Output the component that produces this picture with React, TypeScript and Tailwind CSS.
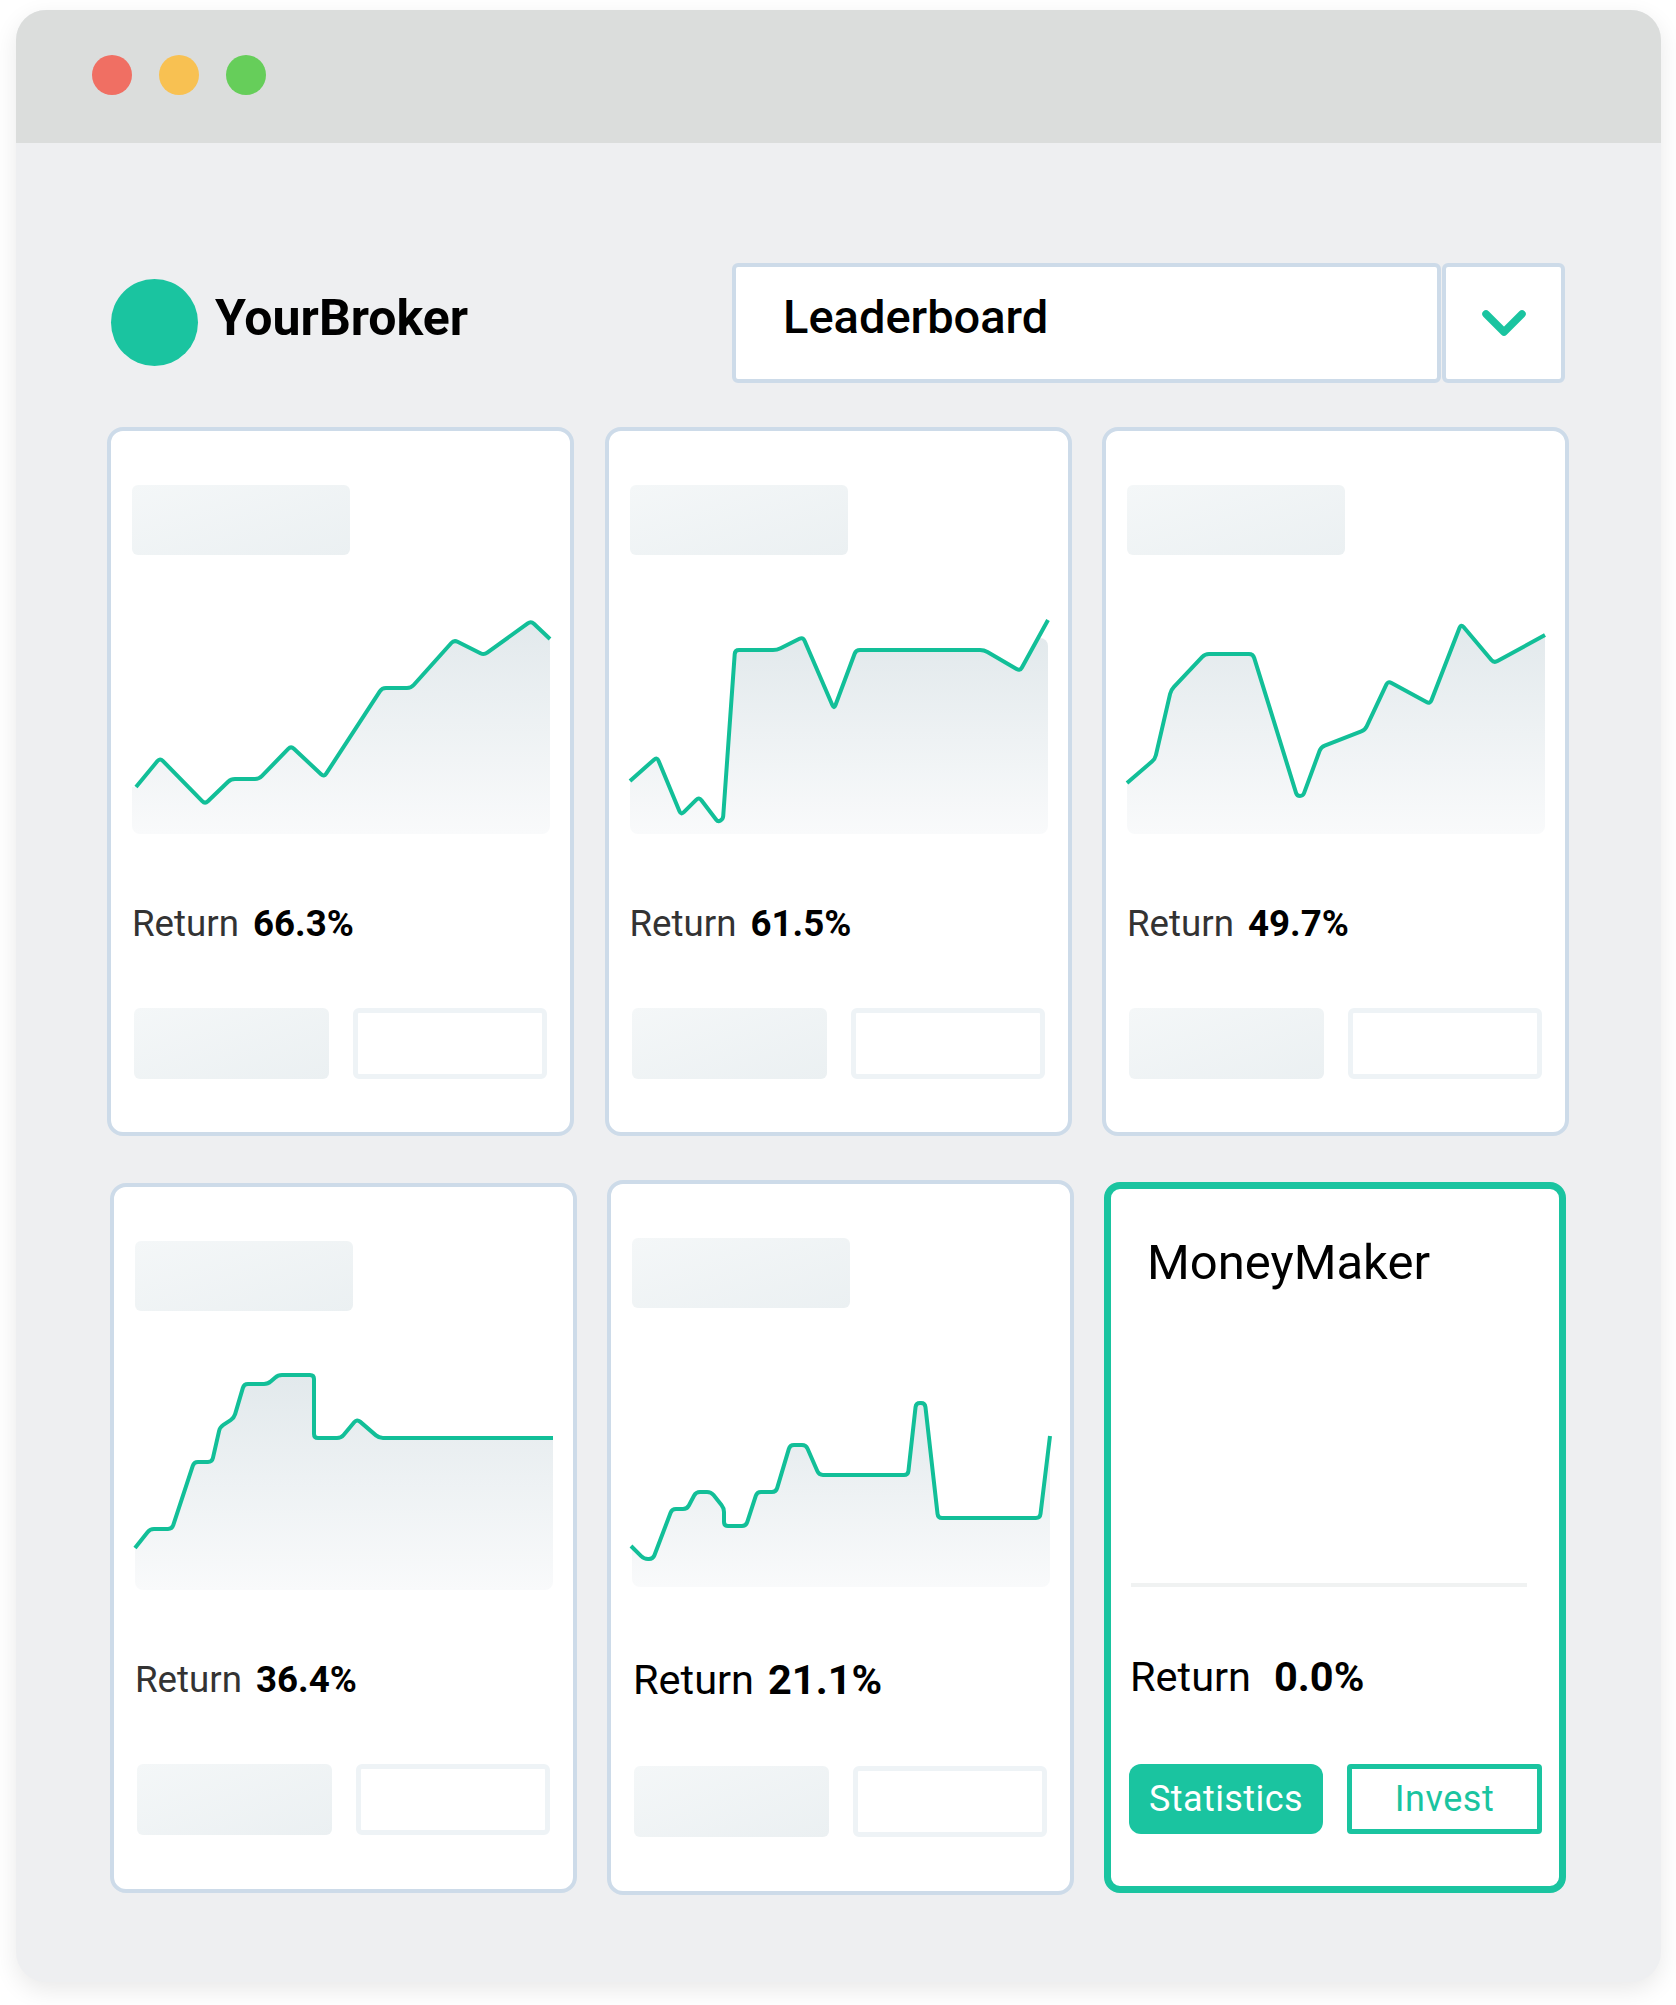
import { ChevronDown } from 'lucide-react'

type Point = [number, number]

const CARDS: {
  value: string
  points: Point[]
  fillTop: number
  className: string
  returnClass: string
  rowClass: string
}[] = [
  {
    value: '66.3%',
    fillTop: 36,
    className: 'h-[709px]',
    returnClass: 'pt-[70px] text-[36.7px] text-[#333333]',
    rowClass: 'h-[174px]',
    points: [[4, 203], [28, 174], [73, 220], [99, 195], [127, 195], [159, 162], [192, 193], [250, 104], [279, 104], [322, 56], [352, 71], [399, 37], [418, 55]],
  },
  {
    value: '61.5%',
    fillTop: 54,
    className: 'h-[709px]',
    returnClass: 'pt-[70px] text-[36.7px] text-[#333333]',
    rowClass: 'h-[174px]',
    points: [[0, 197], [27, 173], [51, 231], [69, 213], [88, 238], [93, 235], [105, 66], [147, 66], [173, 53], [204, 125], [226, 66], [354, 66], [390, 87], [418, 36]],
  },
  {
    value: '49.7%',
    fillTop: 40,
    className: 'h-[709px]',
    returnClass: 'pt-[70px] text-[36.7px] text-[#333333]',
    rowClass: 'h-[174px]',
    points: [[0, 199], [28, 175], [44, 106], [78, 70], [126, 70], [170, 212], [176, 212], [194, 163], [238, 146], [261, 97], [303, 120], [334, 40], [367, 79], [418, 51]],
  },
]

const LOWER_CARDS: typeof CARDS = [
  {
    value: '36.4%',
    fillTop: 35,
    className: 'h-[710px] mt-[3px]',
    returnClass: 'pt-[70px] text-[36.7px] text-[#333333]',
    rowClass: 'h-[174px]',
    points: [[0, 208], [15, 189], [37, 189], [59, 122], [77, 122], [85, 87], [99, 78], [109, 44], [133, 44], [143, 35], [179, 35], [179, 98], [206, 98], [222, 79], [244, 98], [418, 98]],
  },
  {
    value: '21.1%',
    fillTop: 60,
    className: 'h-[715px]',
    returnClass: 'pl-[1px] pt-[73px] text-[41.5px] text-black',
    rowClass: 'h-[179px]',
    points: [[-1, 209], [12, 222], [21, 222], [40, 172], [55, 172], [64, 155], [79, 155], [92, 171], [92, 189], [114, 189], [125, 155], [144, 155], [158, 108], [174, 108], [187, 138], [276, 138], [284, 66], [293, 66], [306, 181], [408, 181], [418, 99]],
  },
]

const GREEN = '#1ac4a0'

// polyline with small rounded corners
function roundedPath(points: Point[], radius = 4) {
  let d = `M${points[0][0]} ${points[0][1]}`
  for (let i = 1; i < points.length - 1; i++) {
    const [x, y] = points[i]
    const [px, py] = points[i - 1]
    const [nx, ny] = points[i + 1]
    const inLen = Math.hypot(x - px, y - py)
    const outLen = Math.hypot(nx - x, ny - y)
    const r = Math.min(radius, inLen / 2, outLen / 2)
    d += ` L${x - ((x - px) / inLen) * r} ${y - ((y - py) / inLen) * r}`
    d += ` Q${x} ${y} ${x + ((nx - x) / outLen) * r} ${y + ((ny - y) / outLen) * r}`
  }
  const last = points[points.length - 1]
  return `${d} L${last[0]} ${last[1]}`
}

function Chart({ id, points, fillTop }: { id: string; points: Point[]; fillTop: number }) {
  const line = roundedPath(points)
  const first = points[0]
  const last = points[points.length - 1]
  return (
    <svg width="418" height="250" viewBox="0 0 418 250" className="block overflow-visible">
      <defs>
        <linearGradient id={`${id}-grad`} gradientUnits="userSpaceOnUse" x1="0" y1={fillTop} x2="0" y2="250">
          <stop offset="0" stopColor="#e2e9ec" />
          <stop offset="1" stopColor="#f9fafb" />
        </linearGradient>
        <clipPath id={`${id}-clip`}>
          <rect x="0" y={fillTop} width="418" height={250 - fillTop} rx="8" />
        </clipPath>
      </defs>
      <path
        d={`${line} L${last[0]} 250 L0 250 L0 ${first[1]} Z`}
        fill={`url(#${id}-grad)`}
        clipPath={`url(#${id}-clip)`}
      />
      <path d={line} fill="none" stroke="#12bf98" strokeWidth="4" strokeLinejoin="round" />
    </svg>
  )
}

function Placeholder({ className }: { className: string }) {
  return <div className={`rounded-[6px] bg-gradient-to-br from-[#f4f7f8] to-[#ebf0f2] ${className}`} />
}

function LeaderCard({ card, id }: { card: (typeof CARDS)[number]; id: string }) {
  return (
    <div className={`w-[467px] shrink-0 rounded-[16px] border-[4px] border-[#cddbe9] bg-white pl-[21px] pt-[54px] ${card.className}`}>
      <Placeholder className="h-[70px] w-[218px]" />
      <div className="mt-[29px]">
        <Chart id={id} points={card.points} fillTop={card.fillTop} />
      </div>
      <div className={`flex items-start leading-[40px] ${card.rowClass} ${card.returnClass}`}>
        <span>Return</span>
        <span className="ml-[14px] font-bold text-black">{card.value}</span>
      </div>
      <div className="flex gap-[24px] pl-[2px]">
        <Placeholder className="h-[71px] w-[195px]" />
        <div className="h-[71px] w-[194px] rounded-[6px] border-[5px] border-[#eef3f6] bg-white" />
      </div>
    </div>
  )
}

function MoneyMakerCard() {
  return (
    <div className="mt-[2px] h-[711px] w-[462px] shrink-0 rounded-[16px] border-[7px] bg-white text-black" style={{ borderColor: GREEN }}>
      <div className="pl-[36px] pt-[46px] text-[49px] leading-[56px]">MoneyMaker</div>
      <div className="ml-[20px] mt-[292px] h-[4px] w-[396px] bg-[#f0f2f2]" />
      <div className="flex pl-[19px] pt-[68px] text-[41.5px] leading-[44px]">
        <span>Return</span>
        <span className="ml-[23px] font-bold">0.0%</span>
      </div>
      <div className="mt-[65px] flex gap-[24px] pl-[18px]">
        <div className="flex h-[70px] w-[194px] items-center justify-center rounded-[12px] text-[36px] tracking-[0.4px] text-white" style={{ background: GREEN }}>
          Statistics
        </div>
        <div className="flex h-[70px] w-[195px] items-center justify-center rounded-[4px] border-[5px] text-[36px] tracking-[0.5px]" style={{ borderColor: GREEN, color: GREEN }}>
          Invest
        </div>
      </div>
    </div>
  )
}

export default function App() {
  return (
    <div className="h-[2005px] w-[1676px] bg-white pl-[16px] pt-[10px] font-[Roboto,sans-serif]">
      <div className="h-[1972px] w-[1645px] overflow-hidden rounded-[30px] bg-[#eeeff1] shadow-[0_8px_24px_rgba(0,0,0,0.09)]">
        <div className="flex h-[133px] gap-[27px] bg-[#dbdddc] pl-[76px] pt-[45px]">
          <div className="size-[40px] rounded-full bg-[#f06f63]" />
          <div className="size-[40px] rounded-full bg-[#f8c152]" />
          <div className="size-[40px] rounded-full bg-[#66ce5a]" />
        </div>

        <div className="mt-[120px] flex h-[120px]">
          <div className="flex w-[716px] shrink-0 items-start pl-[95px] pt-[16px]">
            <div className="size-[87px] rounded-full" style={{ background: GREEN }} />
            <div className="ml-[17px] mt-[11px] text-[50px] font-bold leading-[56px] text-black">YourBroker</div>
          </div>
          <div className="h-[120px] w-[709px] rounded-[6px] border-[4px] border-[#cddbe9] bg-white pl-[47px] pt-[23px] text-[47px] font-medium leading-[54px] text-black">
            Leaderboard
          </div>
          <div className="ml-[1px] flex h-[120px] w-[123px] items-center justify-center rounded-[6px] border-[4px] border-[#cddbe9] bg-white">
            <ChevronDown size={72} strokeWidth={2.5} color={GREEN} />
          </div>
        </div>

        <div className="ml-[91px] mt-[44px] flex gap-[30.5px]">
          {CARDS.map((card, i) => (
            <LeaderCard key={card.value} card={card} id={`top-${i}`} />
          ))}
        </div>

        <div className="ml-[94px] mt-[44px] flex items-start gap-[30px]">
          {LOWER_CARDS.map((card, i) => (
            <LeaderCard key={card.value} card={card} id={`low-${i}`} />
          ))}
          <MoneyMakerCard />
        </div>
      </div>
    </div>
  )
}
